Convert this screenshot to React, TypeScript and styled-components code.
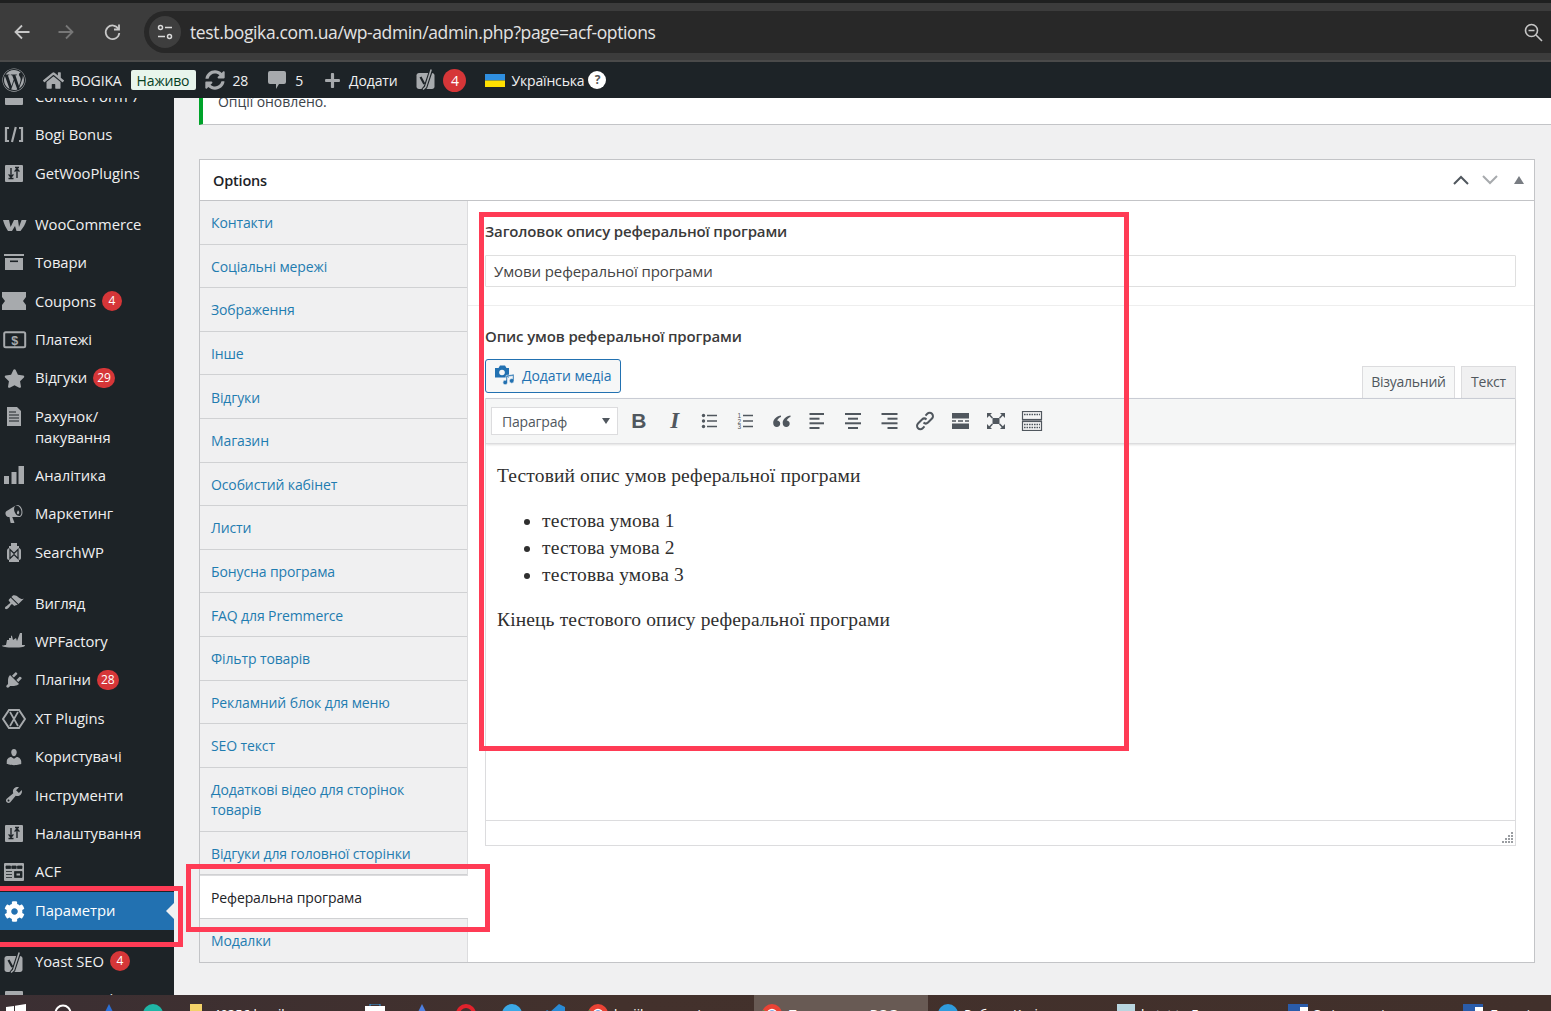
import React from "react";
import styled, { createGlobalStyle } from "styled-components";
import { FaWordpress, FaHome, FaStar, FaCog, FaSyncAlt, FaPlus } from "react-icons/fa";

const SANS = `"Open Sans", "Noto Sans", sans-serif`;

const Global = createGlobalStyle`
  html, body { margin: 0; padding: 0; background: #f0f0f1; }
  * { box-sizing: border-box; }
`;

const Screen = styled.div`
  position: relative;
  width: 1551px;
  height: 1011px;
  overflow: hidden;
  display: flex;
  flex-direction: column;
  font-family: ${SANS};
  background: #f0f0f1;
`;

/* ---------- browser chrome ---------- */
const TabStrip = styled.div`
  height: 3px;
  flex: none;
  background: #1f2020;
`;
const Toolbar = styled.div`
  height: 59px;
  flex: none;
  display: flex;
  align-items: flex-start;
  padding: 8px 0 0 14px;
  background: #3c3c3c;
  border-bottom: 2px solid #4a4a4a;
`;
const NavButton = styled.div<{ $w: number; $mr: number }>`
  width: ${(p) => p.$w}px;
  margin-right: ${(p) => p.$mr}px;
  margin-top: 12px;
  height: 18px;
  flex: none;
  svg { display: block; }
`;
const UrlBar = styled.div`
  flex: 1;
  height: 42px;
  display: flex;
  align-items: center;
  padding: 0 8px 0 5px;
  background: #282828;
  border-radius: 21px 0 0 21px;
`;
const SiteChip = styled.div`
  width: 32px;
  height: 32px;
  border-radius: 50%;
  background: #3e3e3e;
  display: flex;
  align-items: center;
  justify-content: center;
  flex: none;
`;
const UrlText = styled.div`
  flex: 1;
  margin-left: 9px;
  font-family: "Open Sans", sans-serif;
  font-size: 17.5px;
  letter-spacing: -0.37px;
  color: #e3e3e3;
  white-space: nowrap;
`;

/* ---------- admin bar ---------- */
const AdminBar = styled.div`
  height: 36px;
  flex: none;
  display: flex;
  align-items: center;
  background: #1d2327;
  color: #f0f0f1;
  font-size: 14px;
  letter-spacing: -0.16px;
  white-space: nowrap;
`;
const BarSlot = styled.div<{ $x: number }>`
  margin-left: ${(p) => p.$x}px;
  display: flex;
  align-items: center;
  flex: none;
  color: #a7aaad;
  svg { display: block; }
`;
const BarText = styled.span<{ $x: number }>`
  margin-left: ${(p) => p.$x}px;
  flex: none;
`;
const LiveBadge = styled.span`
  margin-left: 9px;
  width: 65px;
  height: 20px;
  flex: none;
  background: #e8f5ec;
  color: #07401f;
  border-radius: 2px;
  text-align: center;
  line-height: 21px;
  font-size: 14px;
  font-weight: 500;
`;
const BarCount = styled.span`
  margin-left: 7px;
  width: 23px;
  height: 23px;
  flex: none;
  border-radius: 50%;
  background: #d63638;
  color: #fff;
  text-align: center;
  line-height: 23px;
  font-size: 14px;
  letter-spacing: 0;
`;
const Help = styled.span`
  margin-left: 4px;
  width: 18px;
  height: 18px;
  flex: none;
  border-radius: 50%;
  background: #fff;
  color: #555;
  font-size: 12px;
  font-weight: 700;
  text-align: center;
  line-height: 18px;
`;

/* ---------- layout ---------- */
const Body = styled.div`
  flex: 1;
  min-height: 0;
  display: flex;
  overflow: hidden;
`;
const Sidebar = styled.nav`
  width: 174px;
  flex: none;
  background: #1d2327;
  overflow: hidden;
`;
const MenuList = styled.div`
  margin-top: -20.2px;
  display: flex;
  flex-direction: column;
`;
const MenuItem = styled.div<{ $active?: boolean; $tall?: boolean; $gap?: boolean }>`
  position: relative;
  flex: none;
  height: ${(p) => (p.$tall ? "59.2px" : "38.4px")};
  margin-top: ${(p) => (p.$gap ? "12.6px" : "0")};
  padding-bottom: 1px;
  display: flex;
  align-items: center;
  background: ${(p) => (p.$active ? "#2271b1" : "transparent")};
  color: ${(p) => (p.$active ? "#fff" : "#f0f0f1")};
  font-size: 14.8px;
  line-height: 21px;
  letter-spacing: -0.06px;
`;
const MenuIcon = styled.div<{ $active?: boolean }>`
  width: 35px;
  flex: none;
  align-self: flex-start;
  margin-top: 9px;
  padding-left: 4px;
  color: ${(p) => (p.$active ? "#fff" : "#a7aaad")};
  svg { display: block; }
`;
const MenuLabel = styled.span``;
const CountBadge = styled.span`
  margin-left: 6px;
  min-width: 20px;
  height: 20px;
  padding: 0 4px;
  border-radius: 10px;
  background: #d63638;
  color: #fff;
  font-size: 12px;
  line-height: 20px;
  text-align: center;
  letter-spacing: 0;
`;
const ActiveArrow = styled.div`
  position: absolute;
  right: 0;
  top: 50%;
  margin-top: -8px;
  border: 8px solid transparent;
  border-right-color: #f0f0f1;
  border-left-width: 0;
`;

const Main = styled.main`
  flex: 1;
  min-width: 0;
  padding-left: 25px;
`;
const Notice = styled.div`
  height: 45px;
  margin-top: -18px;
  padding: 12px 0 0 15px;
  background: #fff;
  border-left: 4px solid #00a32a;
  border-bottom: 1px solid #c3c4c7;
  color: #3c434a;
  font-size: 14px;
  letter-spacing: -0.06px;
  line-height: 20px;
`;
const Postbox = styled.section`
  margin: 34px 16px 0 0;
  height: 804px;
  display: flex;
  flex-direction: column;
  background: #fff;
  border: 1px solid #c3c4c7;
`;
const PostHeader = styled.header`
  height: 41px;
  flex: none;
  display: flex;
  align-items: center;
  padding: 0 9px 0 13px;
  border-bottom: 1px solid #c3c4c7;
  color: #1d2327;
  font-size: 14.5px;
  font-weight: 600;
  letter-spacing: -0.2px;
`;
const PostTitle = styled.span`
  flex: 1;
`;
const HandleIcon = styled.svg<{ $mr: number }>`
  display: block;
  margin-right: ${(p) => p.$mr}px;
`;
const PostBody = styled.div`
  flex: 1;
  min-height: 0;
  display: flex;
`;
const TabColumn = styled.ul`
  width: 268px;
  flex: none;
  margin: 0;
  padding: 0;
  list-style: none;
  background: #f0f0f1;
  border-right: 1px solid #dcdcde;
  display: flex;
  flex-direction: column;
`;
const TabRow = styled.li<{ $active?: boolean; $tall?: boolean; $last?: boolean }>`
  flex: none;
  height: ${(p) => (p.$tall ? "63.8px" : "43.6px")};
  margin-right: ${(p) => (p.$active ? "-1px" : "0")};
  padding: ${(p) => (p.$last ? "0 11px" : "2px 11px 0")};
  display: flex;
  align-items: center;
  border-bottom: ${(p) => (p.$last ? "0" : "1px solid #d0d1d3")};
  border-top: ${(p) => (p.$active ? "1px solid #dcdcde" : "0")};
  background: ${(p) => (p.$active ? "#fff" : "transparent")};
  color: ${(p) => (p.$active ? "#1d2327" : "#1f7cb0")};
  font-size: 14px;
  line-height: 20px;
  letter-spacing: -0.12px;
`;
const Panel = styled.div`
  flex: 1;
  min-width: 0;
  display: flex;
  flex-direction: column;
`;
const Field = styled.div<{ $line?: boolean }>`
  padding: ${(p) => (p.$line ? "20px 18px 18px 17px" : "20px 18px 0 17px")};
  border-bottom: ${(p) => (p.$line ? "1px solid #eeeeee" : "0")};
`;
const FieldLabel = styled.label`
  display: block;
  color: #3a3a3a;
  font-size: 15px;
  font-weight: 600;
  line-height: 20px;
  letter-spacing: -0.14px;
`;
const TextValue = styled.div`
  margin-top: 14px;
  height: 32px;
  padding: 0 8px;
  border: 1px solid #dfdfdf;
  border-radius: 1px;
  color: #444;
  font-size: 15px;
  letter-spacing: -0.1px;
  line-height: 30px;
`;
const EditorTop = styled.div`
  margin-top: 13px;
  height: 39px;
  display: flex;
  align-items: flex-start;
`;
const MediaButton = styled.div`
  width: 136px;
  height: 34px;
  display: flex;
  align-items: center;
  gap: 7px;
  padding: 0 0 2px 9px;
  background: #f6f7f7;
  border: 1px solid #2271b1;
  border-radius: 3px;
  color: #2271b1;
  font-size: 14px;
  letter-spacing: -0.08px;
  svg { display: block; flex: none; }
`;
const ModeTabs = styled.div`
  margin-left: auto;
  margin-top: 7px;
  display: flex;
  gap: 6px;
`;
const ModeTab = styled.div<{ $w: number; $on?: boolean }>`
  width: ${(p) => p.$w}px;
  height: 33px;
  text-align: center;
  line-height: 30px;
  font-size: 14px;
  letter-spacing: -0.25px;
  color: #50575e;
  background: ${(p) => (p.$on ? "#f6f7f7" : "#f0f0f1")};
  border: 1px solid #dcdcde;
  margin-bottom: -1px;
`;
const Editor = styled.div`
  height: 448px;
  display: flex;
  flex-direction: column;
  border: 1px solid #dcdcde;
`;
const EditorBar = styled.div`
  height: 46px;
  flex: none;
  display: flex;
  align-items: center;
  padding: 0 0 0 5px;
  background: #f5f6f6;
  border-top: 1px solid #c9ccd4;
  border-bottom: 1px solid #dcdcde;
  box-shadow: 0 1px 2px rgba(0, 0, 0, 0.12);
  margin: -1px 0 0 0;
`;
const FormatSelect = styled.div`
  width: 127px;
  height: 28px;
  flex: none;
  display: flex;
  align-items: center;
  justify-content: space-between;
  padding: 0 7px 0 10px;
  background: #fff;
  border: 1px solid #dcdcde;
  color: #50575e;
  font-size: 14px;
  letter-spacing: -0.2px;
`;
const Caret = styled.span`
  border: 4.5px solid transparent;
  border-top: 6px solid #50575e;
  border-bottom: 0;
`;
const ToolGroup = styled.div`
  display: flex;
  margin-left: 3px;
`;
const ToolButton = styled.div`
  width: 35.75px;
  height: 28px;
  flex: none;
  display: flex;
  align-items: center;
  justify-content: center;
  color: #50575e;
  svg { display: block; }
`;
const BoldGlyph = styled.span`
  font-family: "Liberation Sans", sans-serif;
  font-weight: 700;
  font-size: 21px;
  line-height: 28px;
`;
const ItalicGlyph = styled.span`
  font-family: "Liberation Serif", serif;
  font-weight: 700;
  font-style: italic;
  font-size: 23px;
  line-height: 28px;
`;
const EditorContent = styled.div`
  flex: 1;
  min-height: 0;
  padding: 18px 11px 0 11px;
  font-family: "Liberation Serif", "DejaVu Serif", serif;
  font-size: 19.5px;
  line-height: 27px;
  letter-spacing: 0.13px;
  color: #2f2f2f;
  p { margin: 0 0 18px; }
  ul { margin: 0 0 18px; padding-left: 45px; }
  li { padding: 0; }
`;
const EditorStatus = styled.div`
  height: 25px;
  flex: none;
  display: flex;
  align-items: flex-end;
  justify-content: flex-end;
  border-top: 1px solid #dcdcde;
  padding: 0 2px 2px 0;
  svg { display: block; }
`;

/* ---------- taskbar ---------- */
const Taskbar = styled.footer`
  height: 16px;
  flex: none;
  display: flex;
  align-items: flex-start;
  overflow: hidden;
  color: #fff;
  font-family: "Noto Sans", sans-serif;
  font-size: 13px;
  background: linear-gradient(90deg, #3b2f33 0%, #43312c 40%, #41302b 100%);
`;
const TaskSlot = styled.div<{ $w: number; $on?: boolean }>`
  width: ${(p) => p.$w}px;
  height: 40px;
  flex: none;
  padding-top: 9px;
  display: flex;
  align-items: flex-start;
  justify-content: center;
  background: ${(p) => (p.$on ? "#685a54" : "transparent")};
  svg { display: block; }
`;
const TaskWindow = styled(TaskSlot)<{ $pad?: number }>`
  justify-content: flex-start;
  padding-left: ${(p) => p.$pad ?? 8}px;
  gap: 6px;
  white-space: nowrap;
  line-height: 20px;
`;

/* ---------- annotations ---------- */
const Callout = styled.div<{ $x: number; $y: number; $w: number; $h: number }>`
  position: absolute;
  left: ${(p) => p.$x}px;
  top: ${(p) => p.$y}px;
  width: ${(p) => p.$w}px;
  height: ${(p) => p.$h}px;
  border: 5px solid #ff3b55;
  pointer-events: none;
`;

/* ---------- drawn icons ---------- */
const G = "currentColor";
const Ico = ({ children, s = 20 }: { children: React.ReactNode; s?: number }) => (
  <svg width={s} height={s} viewBox="0 0 20 20" fill={G}>{children}</svg>
);
const SlidersIcon = () => (
  <Ico>
    <rect x="1" y="1" width="18" height="17" rx="1" />
    <path d="M7 4v8M4.6 10.4 7 13.4l2.4-3M13 14V6M10.6 7.600 13 4.600l2.400 3M4.500 14.500h5M11 3.500h4" stroke="#1d2327" strokeWidth="1.400" fill="none" />
  </Ico>
);
const BracketIcon = () => (
  <Ico>
    <path d="M5 3H2v13h3M15 3h3v13h-3M11.800 2 8 17" stroke={G} strokeWidth="2.200" fill="none" />
  </Ico>
);
const WooIcon = () => (
  <svg width="24" height="20" viewBox="0 0 24 20" fill={G} style={{ marginLeft: -1 }}>
    <path d="M0 5h6l1.600 7L11 5h4l1 7 2.600-7H23.500c-1 4-3.500 8-6 11h-4l-1.500-5-3 5H5C3 13 1 9 0 5Z" />
  </svg>
);
const BoxIcon = () => (
  <Ico>
    <path d="M0 1h20v2H0ZM1 5h18v12H1Z" />
    <rect x="6" y="7.500" width="8" height="1.600" fill="#1d2327" />
  </Ico>
);
const TicketIcon = () => (
  <svg width="24" height="20" viewBox="0 0 24 20" fill={G} style={{ marginLeft: -2 }}>
    <path d="M0 1h24v5l-3 4 3 4v5H0v-5l3-4-3-4Z" />
  </svg>
);
const PayIcon = () => (
  <svg width="24" height="20" viewBox="0 0 24 20" style={{ marginLeft: -1 }}>
    <rect x="1.200" y="2.200" width="21" height="15" rx="1.500" fill="none" stroke={G} strokeWidth="2" />
    <text x="11.700" y="14.600" fontSize="12.500" fontWeight="700" textAnchor="middle" fill={G} fontFamily="Liberation Sans">$</text>
  </svg>
);
const DocIcon = () => (
  <Ico>
    <path d="M3 0h10l4 4v15H3Z" />
    <path d="M5 5h7M5 8h10M5 11h10M5 14h10" stroke="#1d2327" strokeWidth="1" />
  </Ico>
);
const BarsIcon = () => (
  <Ico>
    <path d="M0 10h5v8H0ZM7.500 6h5v12h-5ZM14.500 0H20v18h-5.500Z" />
  </Ico>
);
const MegaphoneIcon = () => (
  <Ico>
    <path d="M18.150 5.940c.46 1.620.38 3.220-.02 4.480-.42 1.280-1.260 2.180-2.300 2.480-.16.060-.26.060-.4.060-.06.020-.12.020-.18.020-.06.020-.14.020-.22.020h-6.800l2.220 5.500c.02.140-.06.260-.14.340-.08.100-.24.160-.34.160H6.950c-.1 0-.26-.06-.34-.16-.08-.08-.16-.2-.14-.34l-1-5.500H4.250l-.02-.02c-.5.060-1.080-.18-1.540-.62s-.88-1.080-1.060-1.880c-.24-.8-.2-1.560-.02-2.200.2-.62.58-1.080 1.060-1.300l.02-.02 9-5.400c.1-.06.18-.1.24-.16.06-.04.14-.08.24-.12.16-.08.28-.12.5-.18 1.040-.3 2.240.1 3.240.98 1.040.9 1.880 2.240 2.340 3.860zm-2.580 5.980h-.02c.4-.1.74-.34 1.040-.7.58-.7.86-1.760.86-3.040-.02-.64-.12-1.300-.3-2-.45-1.560-1.300-2.860-2.280-3.680-.48-.4-.98-.7-1.460-.86-.49-.16-.97-.2-1.420-.06-.41.100-.75.350-1.050.7-.59.7-.87 1.760-.87 3.040.02.640.12 1.300.3 2 .46 1.560 1.300 2.860 2.300 3.680.5.4 1 .7 1.500.86.47.14.95.18 1.400.06zm-1.860-5.340c.3-.1.67.020.96.320.37.360.6.9.6 1.500 0 .6-.23 1.140-.6 1.500-.29.3-.66.420-.96.320-.33-.1-.55-.42-.67-.82-.14-.4-.14-.86 0-1.300.12-.4.34-.72.67-.84z" />
  </Ico>
);
const BrushIcon = () => (
  <Ico>
    <path d="M14.480 11.060L7.410 3.990l1.500-1.500c.5-.56 2.300-.47 3.510.320 1.210.8 1.430 1.280 2.910 2.100 1.180.640 2.450 1.260 4.450.850zm-.71.710L6.700 4.700 4.930 6.470c-.39.390-.39 1.020 0 1.410l1.060 1.060c.39.390.39 1.030 0 1.420-.6.6-1.430 1.110-2.210 1.690-.35.260-.7.530-1.010.840C1.430 13.230.4 14.950 1.260 15.810c.86.860 2.580-.17 3.450-1.050.31-.31.58-.66.840-1.010.58-.78 1.090-1.610 1.690-2.210.39-.39 1.030-.39 1.420 0l1.060 1.060c.39.390 1.020.390 1.410 0z" />
  </Ico>
);
const PlugIcon = () => (
  <Ico>
    <path d="M13.110 4.360L9.870 7.600 8 5.730l3.240-3.240c.35-.34 1.050-.2 1.560.320.52.510.66 1.210.31 1.550zm-8 1.770l.91-1.120 9.010 9.010-1.190.84c-.71.71-2.630 1.160-3.820 1.160H6.140L4.900 17.260c-.59.590-1.540.590-2.120 0-.59-.58-.59-1.530 0-2.120l1.240-1.240v-3.880c0-1.130.4-3.190 1.090-3.890zm7.260 3.970l3.240-3.240c.34-.35 1.040-.21 1.550.310.52.510.66 1.210.31 1.550l-3.240 3.250z" />
  </Ico>
);
const UserIcon = () => (
  <Ico>
    <path d="M10 9.250c-2.270 0-2.730-3.440-2.730-3.440C7 4.020 7.820 2 9.970 2c2.160 0 2.980 2.020 2.710 3.810 0 0-.41 3.440-2.680 3.440zm0 2.570L12.720 10c2.390 0 4.520 2.330 4.520 4.530v2.490s-3.650 1.130-7.240 1.130c-3.650 0-7.240-1.130-7.240-1.130v-2.490c0-2.250 1.940-4.480 4.470-4.480z" />
  </Ico>
);
const WrenchIcon = () => (
  <Ico>
    <path d="M16.680 9.770c-1.340 1.340-3.300 1.670-4.950.99l-5.410 6.520c-.99.99-2.590.99-3.580 0s-.99-2.590 0-3.570l6.520-5.420c-.68-1.650-.35-3.610.99-4.950 1.280-1.280 3.120-1.620 4.720-1.060l-2.890 2.890 2.820 2.820 2.860-2.870c.53 1.580.18 3.390-1.080 4.650zM3.810 16.210c.4.390 1.040.39 1.430 0 .4-.4.4-1.040 0-1.430-.39-.4-1.030-.4-1.430 0-.39.39-.39 1.030 0 1.430z" />
  </Ico>
);
const CommentIcon = () => (
  <svg width="18" height="20" viewBox="0 0 18 20" fill={G}>
    <path d="M2 1h14a2 2 0 0 1 2 2v9a2 2 0 0 1-2 2h-5l-3 5v-5H2a2 2 0 0 1-2-2V3a2 2 0 0 1 2-2Z" />
  </svg>
);
const LanternIcon = () => (
  <Ico>
    <path d="M7 0h6v3h2v2c2 1 2 2 2 3v7c0 1-1 2-2 2v2H5v-2c-1 0-2-1-2-2V8c0-1 0-2 2-3V3h2Z" />
    <path d="M6 6.500v9l4-4 4 4v-9l-4 4Z" fill="none" stroke="#1d2327" strokeWidth="1.200" />
  </Ico>
);
const FactoryIcon = () => (
  <svg width="24" height="20" viewBox="0 0 24 20" fill={G} style={{ marginLeft: -2 }}>
    <path d="M5 8h2v-2h2V3.500l1 .5 1 4 3-2 1 3 3-8h2v12h3c0 2-3 2.500-11 2.500S0 15 0 13.500c2 0 3-.5 4-.5Z" />
  </svg>
);
const XtIcon = () => (
  <svg width="24" height="20" viewBox="0 0 24 20" fill="none" stroke={G} strokeWidth="2" style={{ marginLeft: -2 }}>
    <path d="M7 1h10l6 9-6 9H7L1 10Z" />
    <path d="M8 3l8 14M16 3 8 17" strokeWidth="1.700" />
  </svg>
);
const AcfIcon = () => (
  <Ico>
    <rect x="0" y="1" width="20" height="18" rx="1" />
    <path d="M2 4h4.500v2.500H2zM7.800 4h4.400v2.500H7.800zM13.500 4H18v2.500h-4.500zM2 9.500h6M2 12.500h6M2 15.500h6M10.500 9.500H18v6h-7.500z" fill="#1d2327" stroke="#1d2327" strokeWidth=".8" />
    <rect x="12.500" y="11.500" width="3.500" height="2" />
  </Ico>
);
const YoastIcon = ({ s = 20 }: { s?: number }) => (
  <svg width={s} height={s + 2} viewBox="0 0 20 22" style={{ display: "block" }}>
    <path d="M3 4h13c1.500 0 2.500 1 2.500 2.500v11c0 1.500-1 2.500-2.500 2.500H3c-1.500 0-2.500-1-2.500-2.500v-11C.5 5 1.500 4 3 4Z" fill={G} />
    <path d="M4.500 8 8.300 15" stroke="#1d2327" strokeWidth="2.200" fill="none" />
    <path d="M15.500 0 9.500 18 7 21" stroke="#1d2327" strokeWidth="3.800" fill="none" />
    <path d="M15.200 .5 9.600 18 7 20.500" stroke={G} strokeWidth="1.500" fill="none" />
  </svg>
);
const PlainBox = () => (
  <Ico>
    <rect x="1" y="1" width="18" height="17" rx="1" />
  </Ico>
);

type Row = { t: React.ReactNode; i: React.ReactNode; n?: string; gap?: boolean; tall?: boolean; on?: boolean };
const menu: Row[] = [
  { t: "Contact Form 7", i: <PlainBox /> },
  { t: "Bogi Bonus", i: <BracketIcon /> },
  { t: "GetWooPlugins", i: <SlidersIcon /> },
  { t: "WooCommerce", i: <WooIcon />, gap: true },
  { t: "Товари", i: <BoxIcon /> },
  { t: "Coupons", i: <TicketIcon />, n: "4" },
  { t: "Платежі", i: <PayIcon /> },
  { t: "Відгуки", i: <FaStar size={21} />, n: "29" },
  { t: <>Рахунок/<br />пакування</>, i: <DocIcon />, tall: true },
  { t: "Аналітика", i: <BarsIcon /> },
  { t: "Маркетинг", i: <MegaphoneIcon /> },
  { t: "SearchWP", i: <LanternIcon /> },
  { t: "Вигляд", i: <BrushIcon />, gap: true },
  { t: "WPFactory", i: <FactoryIcon /> },
  { t: "Плагіни", i: <PlugIcon />, n: "28" },
  { t: "XT Plugins", i: <XtIcon /> },
  { t: "Користувачі", i: <UserIcon /> },
  { t: "Інструменти", i: <WrenchIcon /> },
  { t: "Налаштування", i: <SlidersIcon /> },
  { t: "ACF", i: <AcfIcon /> },
  { t: "Параметри", i: <FaCog size={21} />, on: true },
  { t: "Yoast SEO", i: <YoastIcon />, n: "4", gap: true },
  { t: "Loco Translate", i: <PlainBox /> },
];

const tabs: { t: React.ReactNode; tall?: boolean; on?: boolean }[] = [
  { t: "Контакти" },
  { t: "Соціальні мережі" },
  { t: "Зображення" },
  { t: "Інше" },
  { t: "Відгуки" },
  { t: "Магазин" },
  { t: "Особистий кабінет" },
  { t: "Листи" },
  { t: "Бонусна програма" },
  { t: "FAQ для Premmerce" },
  { t: "Фільтр товарів" },
  { t: "Рекламний блок для меню" },
  { t: "SEO текст" },
  { t: <span>Додаткові відео для сторінок<br />товарів</span>, tall: true },
  { t: "Відгуки для головної сторінки" },
  { t: "Реферальна програма", on: true },
  { t: "Модалки" },
];

const L = (d: string) => <path d={d} stroke={G} strokeWidth="2" fill="none" />;
const tools: React.ReactNode[] = [
  <BoldGlyph>B</BoldGlyph>,
  <ItalicGlyph>I</ItalicGlyph>,
  <Ico>
    <path d="M7 4.500h10M7 10h10M7 15.500h10" stroke={G} strokeWidth="1.400" fill="none" />
    <circle cx="3.500" cy="4.500" r="1.700" /><circle cx="3.500" cy="10" r="1.700" /><circle cx="3.500" cy="15.500" r="1.700" />
  </Ico>,
  <Ico>
    <path d="M7 4.500h10M7 10h10M7 15.500h10" stroke={G} strokeWidth="1.400" fill="none" />
    <text x="1.500" y="7" fontSize="6.500" fontFamily="Liberation Sans" fill={G}>1</text>
    <text x="1.500" y="12.500" fontSize="6.500" fontFamily="Liberation Sans" fill={G}>2</text>
    <text x="1.500" y="18" fontSize="6.500" fontFamily="Liberation Sans" fill={G}>3</text>
  </Ico>,
  <Ico>
    <path d="M9 4.500C5 5 1.200 8 1.200 12c0 2.500 1.600 4 3.600 4 2 0 3.400-1.500 3.400-3.300 0-1.800-1.300-3.100-3-3.100 .5-1.500 2-3 3.800-3.600ZM18.500 4.500c-4 .5-7.800 3.500-7.800 7.500 0 2.500 1.600 4 3.600 4 2 0 3.400-1.500 3.400-3.300 0-1.800-1.300-3.100-3-3.100 .5-1.500 2-3 3.800-3.600Z" />
  </Ico>,
  <Ico>{L("M1.500 3h14.500")}{L("M1.500 7.700h10")}{L("M1.500 12.300h14.500")}{L("M1.500 17h10")}</Ico>,
  <Ico>{L("M2 3h16")}{L("M5 7.700h10")}{L("M2 12.300h16")}{L("M5 17h10")}</Ico>,
  <Ico>{L("M2.500 3h16")}{L("M8.500 7.700h10")}{L("M2.500 12.300h16")}{L("M8.500 17h10")}</Ico>,
  <Ico>
    <path d="M8.500 11.500a3.200 3.200 0 0 0 4.500 0l4-4a3.300 3.300 0 0 0-4.700-4.700L10.500 4.600M11.500 8.500a3.200 3.200 0 0 0-4.500 0l-4 4a3.300 3.300 0 0 0 4.700 4.700l1.800-1.800" stroke={G} strokeWidth="2" fill="none" />
  </Ico>,
  <Ico>
    <path d="M1 2h17v5.500H1ZM1 12.500h17V18H1Z" />
    <path d="M1 10h4M7 10h5M14 10h4" stroke={G} strokeWidth="1.500" />
  </Ico>,
  <Ico>
    <rect x="6.500" y="7" width="7" height="6" />
    <path d="M1 2h5L4.300 3.700 7 6.400 5.900 7.500 3.200 4.800 1 7ZM19 2h-5l1.700 1.700L13 6.400l1.100 1.100 2.700-2.700L19 7ZM1 18h5l-1.700-1.700L7 13.600l-1.100-1.100-2.700 2.700L1 13ZM19 18h-5l1.700-1.700L13 13.600l1.100-1.100 2.700 2.700L19 13Z" />
  </Ico>,
  <svg width="22" height="20" viewBox="0 0 22 20" fill="none" stroke={G}>
    <rect x="1.500" y=".5" width="19" height="8" strokeWidth="1.200" />
    <rect x="1.500" y="10.500" width="19" height="9" strokeWidth="1.200" />
    <path d="M3 3.500h16M3 13.500h16M3 16.500h16" strokeWidth="1.600" strokeDasharray="1.600 .9" />
    <path d="M1 9.500h20" strokeWidth=".6" />
  </svg>,
];

const Dot = ({ c }: { c: string }) => (
  <svg width="20" height="20" viewBox="0 0 20 20"><circle cx="10" cy="10" r="10" fill={c} /></svg>
);
const ChromeDot = () => (
  <svg width="20" height="20" viewBox="0 0 20 20">
    <circle cx="10" cy="10" r="10" fill="#ea4335" />
    <path d="M10 10 20 10A10 10 0 0 1 10 20Z" fill="#fbbc05" />
    <path d="M10 10 10 20A10 10 0 0 1 1 6Z" fill="#34a853" />
    <circle cx="10" cy="10" r="4.500" fill="#4a90e2" stroke="#fff" strokeWidth="1.500" />
  </svg>
);

export default function App() {
  return (
    <Screen>
      <Global />
      <TabStrip />
      <Toolbar>
        <NavButton $w={16} $mr={28}>
          <svg width="16" height="18" viewBox="0 0 16 18" fill="none" stroke="#c7c7c7" strokeWidth="1.800"><path d="M15.500 9H1.500M8 2.500 1.500 9 8 15.500" /></svg>
        </NavButton>
        <NavButton $w={16} $mr={30}>
          <svg width="16" height="18" viewBox="0 0 16 18" fill="none" stroke="#777" strokeWidth="1.800"><path d="M.5 9h14M8 2.500 14.500 9 8 15.500" /></svg>
        </NavButton>
        <NavButton $w={16} $mr={24}>
          <svg width="17" height="18" viewBox="0 0 17 18" fill="none" stroke="#c7c7c7" strokeWidth="1.800"><path d="M14.500 6A6.800 6.800 0 1 0 15.300 10" /><path d="M15 1.500V6.500H10" /></svg>
        </NavButton>
        <UrlBar>
          <SiteChip>
            <svg width="16" height="16" viewBox="0 0 16 16" fill="none" stroke="#dadada" strokeWidth="1.500"><circle cx="3.500" cy="3.500" r="2" /><path d="M8 3.500h7M1 12.500h7" /><circle cx="12.500" cy="12.500" r="2" /></svg>
          </SiteChip>
          <UrlText>test.bogika.com.ua/wp-admin/admin.php?page=acf-options</UrlText>
          <svg width="19" height="19" viewBox="0 0 19 19" fill="none" stroke="#c7c7c7" strokeWidth="1.600"><circle cx="7.500" cy="7.500" r="6" /><path d="M4.500 7.500h6M12 12l6 6" /></svg>
        </UrlBar>
      </Toolbar>

      <AdminBar>
        <BarSlot $x={2}><FaWordpress size={24} /></BarSlot>
        <BarSlot $x={17}><FaHome size={21} /></BarSlot>
        <BarText $x={7}>BOGIKA</BarText>
        <LiveBadge>Наживо</LiveBadge>
        <BarSlot $x={9}><FaSyncAlt size={20} /></BarSlot>
        <BarText $x={8}>28</BarText>
        <BarSlot $x={20}><CommentIcon /></BarSlot>
        <BarText $x={9}>5</BarText>
        <BarSlot $x={21}><FaPlus size={17} /></BarSlot>
        <BarText $x={8}>Додати</BarText>
        <BarSlot $x={19}><YoastIcon s={20} /></BarSlot>
        <BarCount>4</BarCount>
        <BarSlot $x={19}>
          <svg width="20" height="13" viewBox="0 0 20 13"><rect width="20" height="6.500" fill="#2f8fe0" /><rect y="6.500" width="20" height="6.500" fill="#ffe000" /></svg>
        </BarSlot>
        <BarText $x={6}>Українська</BarText>
        <Help>?</Help>
      </AdminBar>

      <Body>
        <Sidebar>
          <MenuList>
            {menu.map((m, i) => (
              <MenuItem key={i} $active={m.on} $tall={m.tall} $gap={m.gap}>
                <MenuIcon $active={m.on}>{m.i}</MenuIcon>
                <MenuLabel>{m.t}</MenuLabel>
                {m.n && <CountBadge>{m.n}</CountBadge>}
                {m.on && <ActiveArrow />}
              </MenuItem>
            ))}
          </MenuList>
        </Sidebar>

        <Main>
          <Notice>Опції оновлено.</Notice>
          <Postbox>
            <PostHeader>
              <PostTitle>Options</PostTitle>
              <HandleIcon $mr={13} width="16" height="10" viewBox="0 0 16 10" fill="none" stroke="#50575e" strokeWidth="2"><path d="M1 9l7-7 7 7" /></HandleIcon>
              <HandleIcon $mr={16} width="16" height="10" viewBox="0 0 16 10" fill="none" stroke="#a7aaad" strokeWidth="2"><path d="M1 1l7 7 7-7" /></HandleIcon>
              <HandleIcon $mr={1} width="10" height="8" viewBox="0 0 10 8" fill="#787c82"><path d="M5 0l5 8H0Z" /></HandleIcon>
            </PostHeader>
            <PostBody>
              <TabColumn>
                {tabs.map((t, i) => (
                  <TabRow key={i} $active={t.on} $tall={t.tall} $last={i === tabs.length - 1}>{t.t}</TabRow>
                ))}
              </TabColumn>
              <Panel>
                <Field $line>
                  <FieldLabel>Заголовок опису реферальної програми</FieldLabel>
                  <TextValue>Умови реферальної програми</TextValue>
                </Field>
                <Field>
                  <FieldLabel>Опис умов реферальної програми</FieldLabel>
                  <EditorTop>
                    <MediaButton>
                      <svg width="20" height="20" viewBox="0 0 20 20" fill="#2271b1">
                        <path d="M0 3h3.500L5 .5h5L11.500 3H14v9.500H0Z" />
                        <circle cx="7" cy="7.500" r="2.800" fill="#f6f7f7" />
                        <path d="M12.500 17.500a2.300 2.300 0 1 1-1.500-2.200v-4.800l8-1.500v6.800a2.300 2.300 0 1 1-1.500-2.100v-2.800l-5 1Z" stroke="#f6f7f7" strokeWidth=".6" />
                      </svg>
                      Додати медіа
                    </MediaButton>
                    <ModeTabs>
                      <ModeTab $w={93} $on>Візуальний</ModeTab>
                      <ModeTab $w={55}>Текст</ModeTab>
                    </ModeTabs>
                  </EditorTop>
                  <Editor>
                    <EditorBar>
                      <FormatSelect>Параграф<Caret /></FormatSelect>
                      <ToolGroup>
                        {tools.map((t, i) => <ToolButton key={i}>{t}</ToolButton>)}
                      </ToolGroup>
                    </EditorBar>
                    <EditorContent>
                      <p>Тестовий опис умов реферальної програми</p>
                      <ul>
                        <li>тестова умова 1</li>
                        <li>тестова умова 2</li>
                        <li>тестовва умова 3</li>
                      </ul>
                      <p>Кінець тестового опису реферальної програми</p>
                    </EditorContent>
                    <EditorStatus>
                      <svg width="11" height="11" viewBox="0 0 11 11" fill="#9a9da1">
                        <path d="M9 0h2v2H9zM6 3h2v2H6zM9 3h2v2H9zM3 6h2v2H3zM6 6h2v2H6zM9 6h2v2H9zM0 9h2v2H0zM3 9h2v2H3zM6 9h2v2H6zM9 9h2v2H9z" />
                      </svg>
                    </EditorStatus>
                  </Editor>
                </Field>
              </Panel>
            </PostBody>
          </Postbox>
        </Main>
      </Body>

      <Taskbar>
        <TaskSlot $w={32}>
          <svg width="20" height="20" viewBox="0 0 20 20" fill="#fff"><path d="M0 3l8-1v8H0ZM9 1.800 20 0v10H9ZM0 11h8v8l-8-1ZM9 11h11v9L9 18.300Z" /></svg>
        </TaskSlot>
        <TaskSlot $w={62}>
          <svg width="18" height="20" viewBox="0 0 18 20" fill="none" stroke="#fff" strokeWidth="2"><circle cx="9" cy="9" r="7.500" /></svg>
        </TaskSlot>
        <TaskSlot $w={30}>
          <svg width="20" height="20" viewBox="0 0 20 20"><path d="M10 0l10 20H0Z" fill="#2b6fd6" /></svg>
        </TaskSlot>
        <TaskSlot $w={58}><Dot c="#1fb5a6" /></TaskSlot>
        <TaskWindow $w={164}>
          <svg width="17" height="20" viewBox="0 0 17 20"><rect width="12" height="20" fill="#f4d36a" /></svg>
          40356 kwail
        </TaskWindow>
        <TaskSlot $w={58}><svg width="20" height="20" viewBox="0 0 20 20"><rect y="2" width="20" height="18" fill="#fff" /><path d="M5 2V0h10v2" stroke="#3aa0e8" fill="none" /></svg></TaskSlot>
        <TaskSlot $w={36}>
          <svg width="20" height="20" viewBox="0 0 20 20"><path d="M10 0l10 20H0Z" fill="#4d7fe0" /></svg>
        </TaskSlot>
        <TaskSlot $w={52}><svg width="20" height="20" viewBox="0 0 20 20" fill="none" stroke="#e2222c" strokeWidth="4"><circle cx="10" cy="10" r="8" /></svg></TaskSlot>
        <TaskSlot $w={40}><Dot c="#3ba8e6" /></TaskSlot>
        <TaskSlot $w={46}><svg width="20" height="20" viewBox="0 0 20 20" fill="#2a8ad4"><path d="M14 0l6 3v14l-6 3-9-8-3 2-2-2 3-2-3-2 2-2 3 2Z" /></svg></TaskSlot>
        <TaskWindow $w={176} $pad={10}><ChromeDot />kraiil.com.ua /</TaskWindow>
        <TaskWindow $w={174} $on><ChromeDot />Параметри ‹ BOG</TaskWindow>
        <TaskWindow $w={181} $pad={10}><Dot c="#2f9bdc" />Робоче Kuri</TaskWindow>
        <TaskWindow $w={171}><svg width="18" height="20" viewBox="0 0 18 20"><rect width="18" height="20" fill="#b9d6e0" /></svg>lo.txt to F</TaskWindow>
        <TaskWindow $w={175}><svg width="20" height="20" viewBox="0 0 20 20"><rect width="20" height="20" fill="#2a5caa" /><rect x="12" y="3" width="8" height="8" fill="#fff" /></svg>Зміни до рішень</TaskWindow>
        <TaskWindow $w={96}><svg width="20" height="20" viewBox="0 0 20 20"><rect width="20" height="20" fill="#2a5caa" /><rect x="12" y="3" width="8" height="8" fill="#fff" /></svg>Договір</TaskWindow>
      </Taskbar>

      <Callout $x={479} $y={212} $w={650} $h={539} />
      <Callout $x={-10} $y={886} $w={193} $h={61} />
      <Callout $x={186} $y={864} $w={304} $h={68} />
    </Screen>
  );
}
